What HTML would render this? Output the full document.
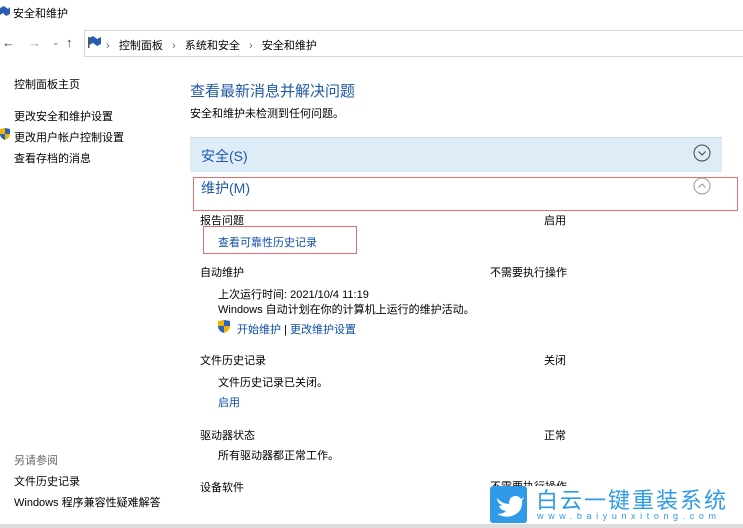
<html><head><style>
body{margin:0;width:743px;height:528px;background:#fff;font-family:"Liberation Sans","Noto Sans CJK SC",sans-serif;font-size:11px;color:#000;position:relative;overflow:hidden}
.a{position:absolute;white-space:nowrap}
.l{color:#0f4fa8}
.h{color:#1e5aa8}
</style></head><body>
<svg class="a" style="left:0;top:5px" width="10" height="12"><path d="M0 3 L4 1 L8 4 L10 2 L10 9 L6 11 L3 8 L0 10Z" fill="#2a5db0"/></svg>
<div class="a" style="left:13px;top:5px">安全和维护</div>
<div class="a" style="left:2px;top:35px;color:#444;font-size:13px">←</div>
<div class="a" style="left:28px;top:35px;color:#aaa;font-size:13px">→</div>
<div class="a" style="left:52px;top:37px;color:#777;font-size:9px">⌄</div>
<div class="a" style="left:66px;top:35px;color:#444;font-size:13px">↑</div>
<div class="a" style="left:84px;top:30px;width:670px;height:25px;border:1px solid #d9d9d9;border-right:none"></div>
<svg class="a" style="left:88px;top:36px" width="14" height="12"><path d="M1 2 L5 0 L9 3 L13 1 L13 8 L9 10 L5 7 L1 9Z" fill="#2a5db0"/><rect x="0" y="1" width="1.5" height="11" fill="#555"/></svg>
<div class="a" style="left:106px;top:37px;color:#000"><span style="color:#666">›</span>&nbsp;&nbsp;&nbsp;控制面板&nbsp;&nbsp;&nbsp;<span style="color:#666">›</span>&nbsp;&nbsp;&nbsp;系统和安全&nbsp;&nbsp;&nbsp;<span style="color:#666">›</span>&nbsp;&nbsp;&nbsp;安全和维护</div>

<div class="a" style="left:14px;top:76px">控制面板主页</div>
<div class="a" style="left:14px;top:108px">更改安全和维护设置</div>
<svg class="a" style="left:0;top:128px" width="10" height="12"><path d="M0 1 L5 0 L10 1 L10 6 Q10 10 5 12 Q0 10 0 6Z" fill="#f0b400"/><path d="M5 0 L10 1 L10 6 L5 6Z M0 6 L5 6 L5 12 Q0 10 0 6Z" fill="#2a62c0"/></svg>
<div class="a" style="left:14px;top:129px">更改用户帐户控制设置</div>
<div class="a" style="left:14px;top:150px">查看存档的消息</div>
<div class="a" style="left:14px;top:452px;color:#666">另请参阅</div>
<div class="a" style="left:14px;top:473px">文件历史记录</div>
<div class="a" style="left:14px;top:494px">Windows 程序兼容性疑难解答</div>

<div class="a h" style="left:190px;top:80px;font-size:15px">查看最新消息并解决问题</div>
<div class="a" style="left:190px;top:105px">安全和维护未检测到任何问题。</div>
<div class="a" style="left:190px;top:137px;width:532px;height:34px;background:#deecf8;border-top:1px solid #c9dcee"></div>
<div class="a h" style="left:201px;top:146px;font-size:14px">安全(S)</div>
<svg class="a" style="left:693px;top:144px" width="18" height="18"><circle cx="9" cy="9" r="8" fill="none" stroke="#444" stroke-width="1"/><path d="M5.5 7.5 L9 11 L12.5 7.5" fill="none" stroke="#444" stroke-width="1.1"/></svg>
<div class="a" style="left:193px;top:177px;width:543px;height:32px;border:1px solid #e07070"></div>
<div class="a h" style="left:201px;top:178px;font-size:14px">维护(M)</div>
<svg class="a" style="left:693px;top:177px" width="18" height="18"><circle cx="9" cy="9" r="8" fill="none" stroke="#999" stroke-width="1"/><path d="M5.5 10.5 L9 7 L12.5 10.5" fill="none" stroke="#999" stroke-width="1.1"/></svg>
<div class="a" style="left:200px;top:212px">报告问题</div>
<div class="a" style="left:544px;top:212px">启用</div>
<div class="a" style="left:203px;top:226px;width:152px;height:26px;border:1px solid #e07070"></div>
<div class="a l" style="left:218px;top:234px">查看可靠性历史记录</div>
<div class="a" style="left:200px;top:264px">自动维护</div>
<div class="a" style="left:490px;top:264px">不需要执行操作</div>
<div class="a" style="left:218px;top:286px">上次运行时间: 2021/10/4 11:19</div>
<div class="a" style="left:218px;top:301px">Windows 自动计划在你的计算机上运行的维护活动。</div>
<svg class="a" style="left:218px;top:320px" width="12" height="13"><path d="M0 1 L6 0 L12 1 L12 6 Q12 11 6 13 Q0 11 0 6Z" fill="#f0b400"/><path d="M6 0 L12 1 L12 6 L6 6Z M0 6 L6 6 L6 13 Q0 11 0 6Z" fill="#2a62c0"/></svg>
<div class="a l" style="left:237px;top:321px">开始维护 <span style="color:#000">|</span> 更改维护设置</div>
<div class="a" style="left:200px;top:352px">文件历史记录</div>
<div class="a" style="left:544px;top:352px">关闭</div>
<div class="a" style="left:218px;top:374px">文件历史记录已关闭。</div>
<div class="a l" style="left:218px;top:394px">启用</div>
<div class="a" style="left:200px;top:427px">驱动器状态</div>
<div class="a" style="left:544px;top:427px">正常</div>
<div class="a" style="left:218px;top:447px">所有驱动器都正常工作。</div>
<div class="a" style="left:200px;top:479px">设备软件</div>
<div class="a" style="left:490px;top:478px">不需要执行操作</div>

<div class="a" style="left:489px;top:486px;width:254px;height:38px;background:#fff"></div>
<div class="a" style="left:490px;top:486px;width:37px;height:37px;background:#2f9be8;border-radius:3px"></div>
<svg class="a" style="left:494px;top:492px" width="30" height="26"><path d="M3 6 Q8 12 15 12 Q15 4 22 4 Q25 4 27 7 L30 5 L28 9 Q29 20 18 24 Q10 26 3 22 Q9 22 12 19 Q6 18 5 14 Q7 14 8 13 Q3 11 3 6Z" fill="#fff"/></svg>
<div class="a" style="left:536px;top:483px;font-size:22px;color:#2f9be8;letter-spacing:2px">白云一键重装系统</div>
<div class="a" style="left:537px;top:511px;font-size:9px;color:#2f9be8;letter-spacing:4.6px">www.baiyunxitong.com</div>
<div class="a" style="left:0;top:524px;width:743px;height:4px;background:#ddd"></div>
</body></html>
